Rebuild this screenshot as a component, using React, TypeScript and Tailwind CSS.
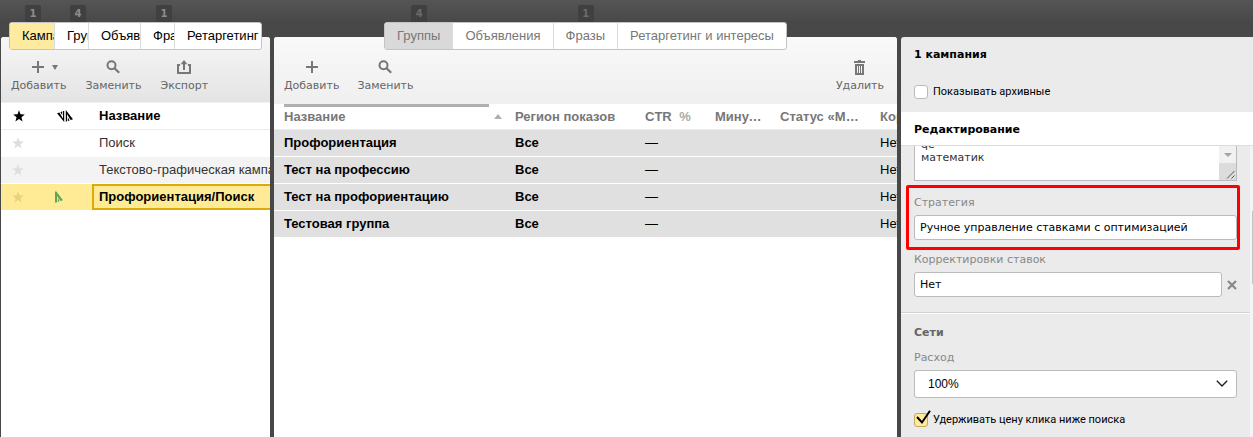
import { useState } from 'react';
import type { ReactNode } from 'react';
import clsx from 'clsx';

interface Tab {
  label: string;
  count?: number;
  width?: string;
}

interface Campaign {
  name: string;
  network?: boolean;
}

const campaignTabs: Tab[] = [
  { label: 'Кампании', count: 1, width: 'w-[45px]' },
  { label: 'Группы', count: 4, width: 'w-[34px]' },
  { label: 'Объявления', width: 'w-[52px]' },
  { label: 'Фразы', count: 1, width: 'w-[34px]' },
  { label: 'Ретаргетинг', width: 'w-[86px]' },
];

const groupTabs: Tab[] = [
  { label: 'Группы', count: 4 },
  { label: 'Объявления' },
  { label: 'Фразы', count: 1 },
  { label: 'Ретаргетинг и интересы' },
];

const campaigns: Campaign[] = [
  { name: 'Поиск' },
  { name: 'Текстово-графическая кампания' },
  { name: 'Профориентация/Поиск', network: true },
];

const groups = ['Профориентация', 'Тест на профессию', 'Тест на профориентацию', 'Тестовая группа'];

function PlusIcon() {
  return (
    <svg className="w-3 h-3" viewBox="0 0 12 12" fill="#777">
      <path d="M5 0h2v5h5v2H7v5H5V7H0V5h5z" />
    </svg>
  );
}

function SearchIcon() {
  return (
    <svg className="w-[14px] h-[14px]" viewBox="0 0 14 14" fill="none" stroke="#777">
      <circle cx="5.5" cy="5.2" r="4" strokeWidth="2" />
      <path d="M8.5 8.3l4.7 4.4" strokeWidth="2.2" />
    </svg>
  );
}

function ExportIcon() {
  return (
    <svg className="w-[14px] h-[14px]" viewBox="0 0 14 14" fill="none" stroke="#777" strokeWidth="2">
      <path d="M3 5H1v8h12V5h-2" />
      <path d="M7 10V2" />
      <path d="M3.6 4.200L7 0l3.400 4.200z" fill="#777" stroke="none" />
    </svg>
  );
}

function TrashIcon() {
  return (
    <svg className="w-[11px] h-[15px]" viewBox="0 0 11 15">
      <path d="M4 0h3v1h4v2H0V1h4zM1 4h9v11H1z" fill="#777" />
      <path d="M3.5 6v7M5.5 6v7M7.5 6v7" stroke="#f3f3f3" />
    </svg>
  );
}

function StarIcon({ className }: { className: string }) {
  return (
    <svg className={clsx('w-3 h-3', className)} viewBox="0 0 12 12" fill="currentColor">
      <path d="M6 .2l1.500 4.100 4.300.2-3.400 2.700 1.200 4.300L6 9.100l-3.600 2.400 1.200-4.300L.2 4.500l4.300-.2z" />
    </svg>
  );
}

function PlacementIcon() {
  return (
    <svg className="w-4 h-3" viewBox="0 0 16 12" fill="#000">
      <path d="M0 3.200L2.400 2.400 6 8.400V1h1.200v11z" />
      <path d="M3.400 2L5.200 1.400V5.200z" />
      <path d="M8.800 0L16 9.200l-2.400.8L10 4.200V11.500H8.800z" />
      <path d="M10.800 7.200l1.800 3.200-1.800.6z" />
    </svg>
  );
}

function NetworkIcon() {
  return (
    <svg className="w-2 h-3" viewBox="0 0 8 12" fill="#5fa755">
      <path d="M0 .5h1.400L8 9.300l-2.400.8-3.600-5V11.500H0z" />
      <path d="M2.800 6.800l1.800 3.400-1.800.7z" />
    </svg>
  );
}

function Tabs({ tabs, active, onSelect, muted }: { tabs: Tab[]; active: number; onSelect: (i: number) => void; muted?: boolean }) {
  return (
    <div role="tablist" className="relative z-10 flex mt-[22px] -mb-[13px] h-7 rounded-[3px] border border-[#c4c4c4] bg-white text-[13px]">
      {tabs.map((tab, i) => (
        <div key={tab.label} className={clsx('relative flex', tab.width)}>
          {tab.count && (
            <span
              className={clsx(
                'absolute -top-[18px] w-4 h-[17px] rounded-t-[2px] bg-[#404040] text-center text-[10px] leading-[17px] font-bold font-["DejaVu_Sans",sans-serif]',
                muted ? 'left-1/2 -ml-2 text-[#6c6c6c]' : 'left-[15px] text-[#8c8c8c]',
              )}
            >
              {tab.count}
            </span>
          )}
          <button
            type="button"
            role="tab"
            aria-selected={i === active}
            onClick={() => onSelect(i)}
            className={clsx(
              'grow overflow-hidden whitespace-nowrap pl-3 text-left border-r border-[#dcdcdc] first:rounded-l-[2px]',
              i === tabs.length - 1 && 'border-r-0',
              i === active && !muted && 'bg-[#ffeba0] border-[#d9c06c]',
              i === active && muted && 'bg-[#d9d9d9]',
              muted ? 'pr-3 text-[#777]' : 'text-black',
            )}
          >
            {tab.label}
          </button>
        </div>
      ))}
    </div>
  );
}

function ToolButton({ label, children }: { label: string; children: ReactNode }) {
  return (
    <button type="button" className="flex flex-col items-center gap-[3px] text-[11px] leading-4 text-[#666] font-['DejaVu_Sans',sans-serif]">
      <span className="flex h-4 items-center justify-center">{children}</span>
      {label}
    </button>
  );
}

function CampaignPanel() {
  const [tab, setTab] = useState(0);

  return (
    <section className="flex w-[269px] shrink-0 flex-col">
      <div className="flex pl-2">
        <Tabs tabs={campaignTabs} active={tab} onSelect={setTab} />
      </div>
      <div className="grow overflow-hidden rounded-t-[3px] bg-white">
        <div className="flex h-[66px] gap-[19px] border-b border-[#f0f0f0] bg-linear-to-b from-[#f6f6f6] to-[#e4e4e4] px-[10px] pt-[22px] items-start">
          <ToolButton label="Добавить">
            <PlusIcon />
            <span className="ml-2 -mr-3 border-x-[3px] border-t-[5px] border-x-transparent border-t-[#777]" />
          </ToolButton>
          <ToolButton label="Заменить">
            <SearchIcon />
          </ToolButton>
          <ToolButton label="Экспорт">
            <ExportIcon />
          </ToolButton>
        </div>
        <table className="w-full table-fixed text-left text-[13px]">
          <thead>
            <tr className="h-[26px] border-b border-[#ececec]">
              <th className="w-[47px] pl-[12px]"><StarIcon className="text-black" /></th>
              <th className="w-[44px] pl-[9px]"><PlacementIcon /></th>
              <th className="pl-[7px] font-bold">Название</th>
            </tr>
          </thead>
          <tbody>
            {campaigns.map((c) => (
              <tr key={c.name} className={clsx('h-[27px] border-b border-white', c.network ? 'bg-[#ffeb96] font-bold text-black' : 'text-[#333] even:bg-[#f3f3f3]')}>
                <td className="pl-[11px]"><StarIcon className={c.network ? 'text-[#e6d280]' : 'text-[#dedede]'} /></td>
                <td className="pl-[7px]">{c.network && <NetworkIcon />}</td>
                <td className="overflow-hidden whitespace-nowrap">
                  <div className={clsx('flex h-[26px] items-center', c.network ? 'border-2 border-r-0 border-[#dcaa0a] pl-[5px]' : 'pl-[7px]')}>{c.name}</div>
                </td>
              </tr>
            ))}
          </tbody>
        </table>
      </div>
    </section>
  );
}

function GroupPanel() {
  const [tab, setTab] = useState(0);

  return (
    <section className="flex min-w-0 grow flex-col">
      <div className="flex justify-center">
        <Tabs tabs={groupTabs} active={tab} onSelect={setTab} muted />
      </div>
      <div className="grow overflow-hidden rounded-t-[3px] bg-white">
        <div className="flex h-[67px] items-start gap-[18px] bg-linear-to-b from-[#f9f9f9] to-[#efefef] px-[10px] pt-[22px]">
          <ToolButton label="Добавить">
            <PlusIcon />
          </ToolButton>
          <ToolButton label="Заменить">
            <SearchIcon />
          </ToolButton>
          <div className="ml-auto pr-[3px]">
            <ToolButton label="Удалить">
              <TrashIcon />
            </ToolButton>
          </div>
        </div>
        <table className="w-full table-fixed text-left text-[13px]">
          <thead>
            <tr className="h-[25px] border-b border-[#ececec] text-[#777]">
              <th className="w-[234px] pl-[10px] align-top">
                <div className="mr-[19px] h-[3px] bg-[#b0b0b0]" />
                <div className="flex items-center justify-between pr-[6px] leading-[19px]">
                  Название
                  <span className="border-x-4 border-b-[5px] border-x-transparent border-b-[#b0b0b0]" />
                </div>
              </th>
              <th className="w-[130px] pl-[7px]">Регион показов</th>
              <th className="w-[70px] pl-[7px]">CTR <span className="ml-1 text-[#aaa]">%</span></th>
              <th className="w-[65px] truncate pl-[7px] pr-2">Минус-фразы</th>
              <th className="w-[100px] truncate pl-[7px] pr-3">Статус «Мало показов»</th>
              <th className="overflow-hidden whitespace-nowrap pl-[7px]">Корректировки</th>
            </tr>
          </thead>
          <tbody>
            {groups.map((name) => (
              <tr key={name} className="h-[27px] border-b border-white bg-[#e0e0e0]">
                <td className="pl-[10px] font-bold">{name}</td>
                <td className="pl-[7px] font-bold">Все</td>
                <td className="pl-[7px]">—</td>
                <td />
                <td />
                <td className="overflow-hidden whitespace-nowrap pl-[7px]">Нет</td>
              </tr>
            ))}
          </tbody>
        </table>
      </div>
    </section>
  );
}

function EditPanel() {
  const [archived, setArchived] = useState(false);
  const [keepPrice, setKeepPrice] = useState(true);

  return (
    <aside className="mt-[37px] flex w-[352px] shrink-0 flex-col rounded-tl-[3px] bg-[#ebebeb] text-[11px] font-['DejaVu_Sans',sans-serif]">
      <div className="h-[75px] px-[13px] pt-[9px]">
        <h2 className="leading-[18px] font-bold">1 кампания</h2>
        <label className="mt-5 flex items-center gap-[5px] font-[Roboto,sans-serif]">
          <input
            type="checkbox"
            checked={archived}
            onChange={(e) => setArchived(e.target.checked)}
            className="size-[14px] appearance-none rounded-[3px] border border-[#bbb] bg-white checked:bg-[#ffeba0]"
          />
          Показывать архивные
        </label>
      </div>
      <h2 className="flex h-[34px] items-center border-b border-[#dcdcdc] bg-white px-[13px] pt-[3px] font-bold">Редактирование</h2>

      <div className="flex grow">
        <form className="grow">
          <div className="px-[13px]">
            <div className="relative h-[35px] overflow-hidden">
              <textarea
                aria-label="Минус-фразы"
                defaultValue={'qe\nматематик'}
                spellCheck={false}
                className="-mt-4 block h-[51px] w-full resize-none overflow-hidden border border-[#bbb] bg-white px-[6px] py-[7px] text-[11px] leading-[13px] text-[#333]"
              />
              <div className="absolute right-px top-0 flex h-[34px] w-[17px] flex-col">
                <span className="flex grow items-center justify-center bg-[#f1f1f1]">
                  <span className="border-x-4 border-t-4 border-x-transparent border-t-[#a3a3a3]" />
                </span>
                <span className="flex h-[17px] items-end justify-end bg-[#dcdcdc] p-px">
                  <svg className="size-[9px]" viewBox="0 0 9 9" stroke="#555">
                    <path d="M1 8.500L8.500 1M5.500 8.500L8.500 5.500" />
                  </svg>
                </span>
              </div>
            </div>

            <div className="relative mt-[13px]">
              <label htmlFor="strategy" className="block leading-[17px] text-[#888]">Стратегия</label>
              <input
                id="strategy"
                defaultValue="Ручное управление ставками с оптимизацией"
                className="mt-1 block h-[25px] w-full rounded-[3px] border border-[#bbb] bg-white px-[5px]"
              />
              <div className="pointer-events-none absolute -top-[9px] -right-[3px] -bottom-[10px] -left-2 rounded-[2px] border-[3px] border-[#f00]" />
            </div>

            <label htmlFor="adjustments" className="mt-[11px] block leading-[17px] text-[#888]">Корректировки ставок</label>
            <div className="mt-1 flex items-center gap-[5px]">
              <input id="adjustments" defaultValue="Нет" className="h-[25px] min-w-0 grow rounded-[3px] border border-[#bbb] bg-white px-[5px]" />
              <button type="button" aria-label="Удалить корректировку">
                <svg className="size-[10px]" viewBox="0 0 10 10" stroke="#888" strokeWidth="2.200">
                  <path d="M1 1l8 8M9 1L1 9" />
                </svg>
              </button>
            </div>
          </div>

          <div className="mt-[15px] border-t border-[#d2d2d2]">
            <div className="border-t border-white px-[13px] pt-[10px]">
              <h3 className="leading-[17px] font-bold text-[#666]">Сети</h3>
              <label htmlFor="spend" className="mt-2 block leading-[17px] text-[#888]">Расход</label>
              <div className="relative mt-1">
                <select id="spend" defaultValue="100%" className="block h-7 w-full appearance-none rounded-[3px] border border-[#bbb] bg-white px-[13px] text-xs font-['Liberation_Sans',sans-serif]">
                  <option>100%</option>
                  <option>50%</option>
                </select>
                <svg className="pointer-events-none absolute right-[9px] top-[10px] h-[7px] w-3" viewBox="0 0 12 7" fill="none" stroke="#222" strokeWidth="1.400">
                  <path d="M.8.8L6 6 11.200.8" />
                </svg>
              </div>
              <label className="relative mt-[14px] flex items-center gap-[5px] pb-[10px] font-[Roboto,sans-serif]">
                <input
                  type="checkbox"
                  checked={keepPrice}
                  onChange={(e) => setKeepPrice(e.target.checked)}
                  className="size-[14px] appearance-none rounded-[3px] border border-[#bbb] bg-white checked:border-[#c0a860] checked:bg-[#ffeba0]"
                />
                {keepPrice && (
                  <svg className="pointer-events-none absolute left-[2px] -top-[2px] size-[15px]" viewBox="0 0 15 15" fill="none" stroke="#000" strokeWidth="2">
                    <path d="M1 7l5 5.500L14 .8" />
                  </svg>
                )}
                Удерживать цену клика ниже поиска
              </label>
            </div>
          </div>
        </form>
        <div className="w-[3px] bg-[#f4f4f4] pt-[65px] pl-[2px]">
          <div className="h-[73px] bg-[#c4c4c4]" />
        </div>
      </div>
    </aside>
  );
}

export default function App() {
  return (
    <main className="flex min-h-screen gap-1 overflow-hidden bg-[#4a4a4a] bg-linear-to-b from-[#555] to-[#484848] to-[22px] pl-px font-['Liberation_Sans',Arial,sans-serif]">
      <CampaignPanel />
      <GroupPanel />
      <EditPanel />
    </main>
  );
}
